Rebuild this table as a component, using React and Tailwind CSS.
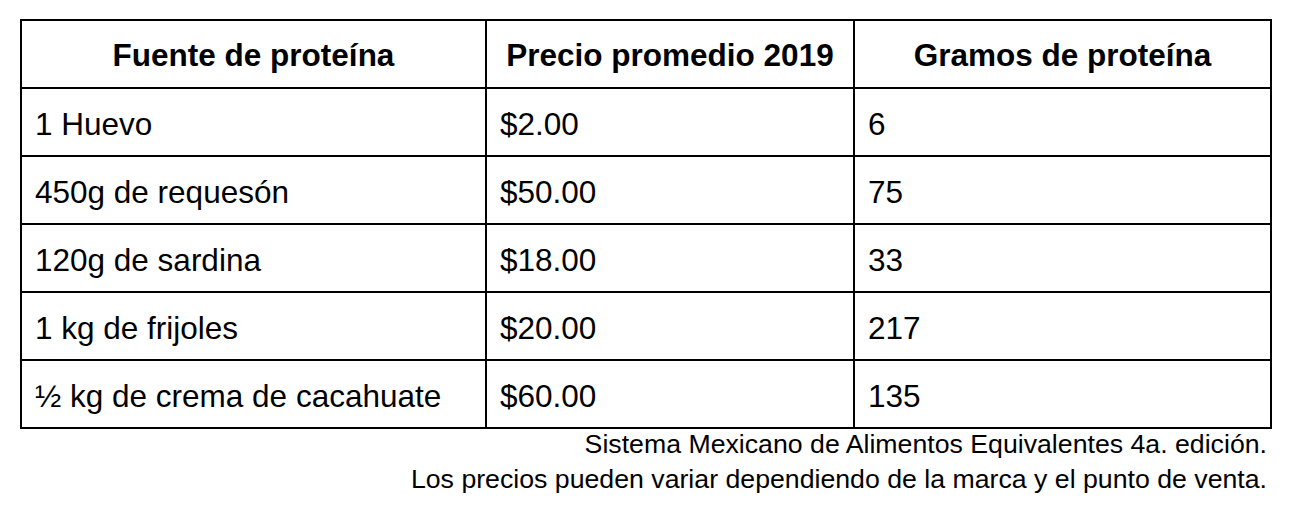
const rows = [
  ["1 Huevo", "$2.00", "6"],
  ["450g de requesón", "$50.00", "75"],
  ["120g de sardina", "$18.00", "33"],
  ["1 kg de frijoles", "$20.00", "217"],
  ["½ kg de crema de cacahuate", "$60.00", "135"],
];

const App = () => {
  return (
    <div className="min-h-[524px] bg-white pl-[20px] pt-[19px] font-['Liberation_Sans',Arial,sans-serif] text-black">
      <div className="w-[1250px]">
        <table className="w-full border-collapse table-fixed">
          <colgroup>
            <col className="w-[465px]" />
            <col className="w-[368px]" />
            <col className="w-[417px]" />
          </colgroup>
          <thead>
            <tr className="h-[68px]">
              <th className="border-2 border-black pt-[3px] text-center text-[31.5px] font-bold leading-none">
                Fuente de proteína
              </th>
              <th className="border-2 border-black pt-[3px] text-center text-[31.5px] font-bold leading-none">
                Precio promedio 2019
              </th>
              <th className="border-2 border-black pt-[3px] text-center text-[31.5px] font-bold leading-none">
                Gramos de proteína
              </th>
            </tr>
          </thead>
          <tbody>
            {rows.map((r) => (
              <tr key={r[0]} className="h-[68px]">
                {r.map((cell, i) => (
                  <td
                    key={i}
                    className="border-2 border-black px-[13px] pt-[5px] text-[31.5px] leading-none"
                  >
                    {cell}
                  </td>
                ))}
              </tr>
            ))}
          </tbody>
        </table>

        {/* Source notes */}
        <div className="-mt-[2px] pr-[3px] text-right text-[26.7px] leading-[35px]">
          <p>Sistema Mexicano de Alimentos Equivalentes 4a. edición.</p>
          <p>Los precios pueden variar dependiendo de la marca y el punto de venta.</p>
        </div>
      </div>
    </div>
  );
};

export default App;
